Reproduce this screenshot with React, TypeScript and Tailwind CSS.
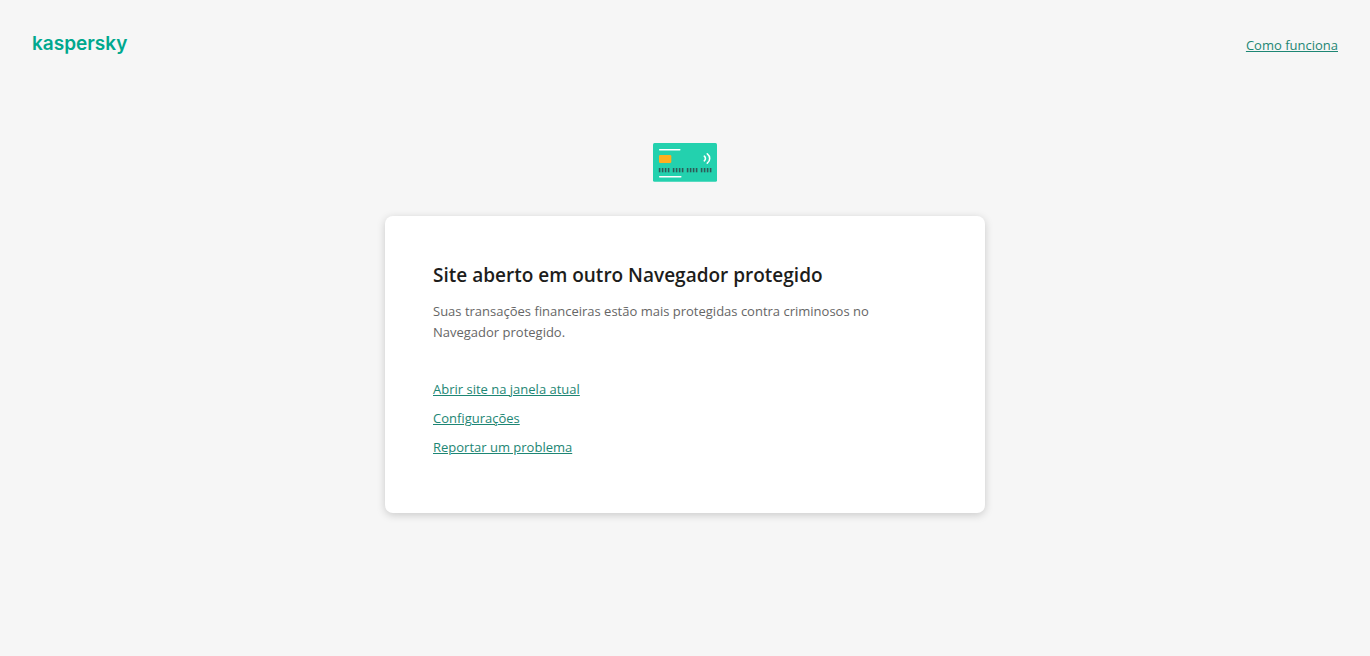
const menuLinks = ['Abrir site na janela atual', 'Configurações', 'Reportar um problema'];

function TextLink({ children }: { children: string }) {
  return (
    <a
      href="#"
      className="text-[13px] leading-[21px] text-[#1d8674] underline decoration-1 underline-offset-1 hover:text-[#00695c]"
    >
      {children}
    </a>
  );
}

function BankCard() {
  const groups = [6, 20, 34, 48];
  const bars = [0, 3, 6, 9];
  return (
    <svg viewBox="0 0 64 39" className="h-[39px] w-16" aria-hidden="true">
      <rect width="64" height="38.7" rx="1.5" fill="#23d1ae" />
      <rect x="6" y="6" width="21.5" height="1.4" rx="0.6" fill="#fff" />
      <rect x="6" y="12" width="12.3" height="8" rx="1.2" fill="#ffaf20" />
      <path d="M51.3 13.2c1.5 1.2 1.5 3.4 0 4.6" fill="none" stroke="#fff" strokeWidth="1.6" strokeLinecap="round" />
      <path d="M54.3 10.8c3.2 2.4 3.2 7 0 9.4" fill="none" stroke="#fff" strokeWidth="1.6" strokeLinecap="round" />
      {groups.map((g) =>
        bars.map((b) => <rect key={g + b} x={g + b - 0.2} y="25" width="1.6" height="4.3" fill="#2f5a58" />),
      )}
      <rect x="6" y="33" width="22.5" height="1.4" rx="0.6" fill="#fff" />
    </svg>
  );
}

export default function App() {
  return (
    <div className="flex min-h-screen flex-col bg-[#f6f6f6] font-['Segoe_UI','Open_Sans',sans-serif]">
      <header className="flex min-h-14 items-end justify-between px-8 pt-8">
        <span className="self-start font-['Inter',sans-serif] text-[19px] leading-6 font-semibold text-[#00a88e]">
          kaspersky
        </span>
        <TextLink>Como funciona</TextLink>
      </header>
      <main className="flex flex-col items-center px-4 pt-[87px] pb-8">
        <BankCard />
        <section className="mt-[34px] w-full max-w-[600px] rounded-lg bg-white px-12 pt-11 pb-[55px] shadow-[0_2px_8px_rgba(0,0,0,0.18)]">
          <h1 className="text-[19px] leading-[30px] font-semibold text-[#1d1d1b]">Site aberto em outro Navegador protegido</h1>
          <p className="mt-[11px] max-w-[460px] text-[13px] leading-[21px] text-[#666]">
            Suas transações financeiras estão mais protegidas contra criminosos no Navegador protegido.
          </p>
          <ul className="mt-9 flex flex-col items-start gap-2">
            {menuLinks.map((label) => (
              <li key={label} className="flex">
                <TextLink>{label}</TextLink>
              </li>
            ))}
          </ul>
        </section>
      </main>
    </div>
  );
}
